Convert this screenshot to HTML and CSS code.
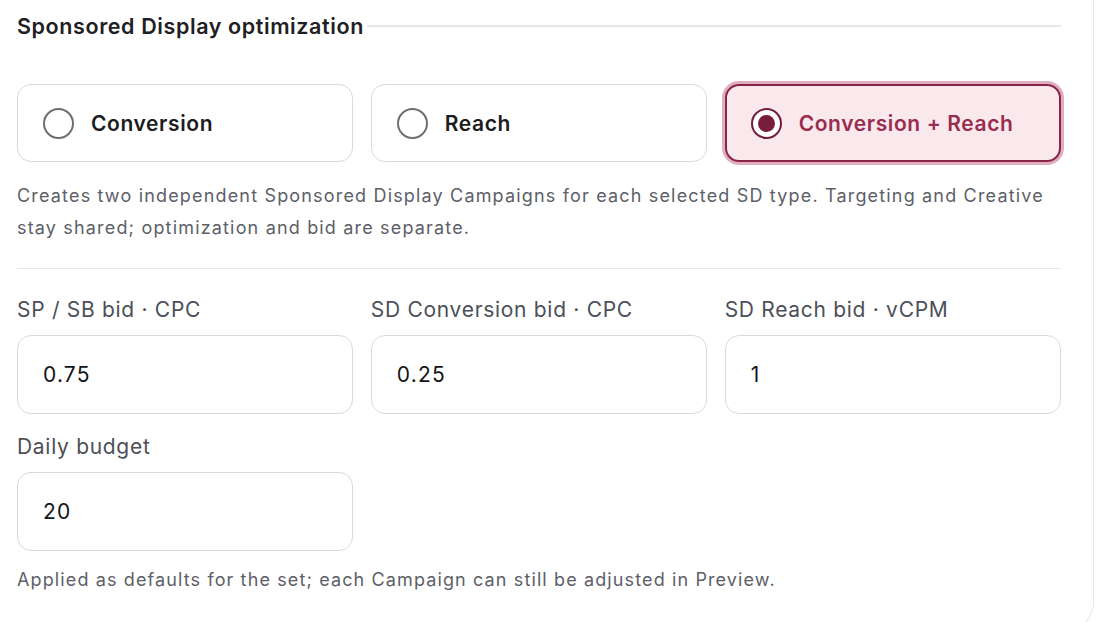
FILE: index.html
```html
<!DOCTYPE html>
<html lang="en">
<head>
<meta charset="utf-8">
<title>Sponsored Display optimization</title>
<link rel="stylesheet" href="styles.css">
</head>
<body>
<div class="panel">
  <div class="section-head">
    <h2 class="section-title">Sponsored Display optimization</h2>
    <div class="head-rule"></div>
  </div>

  <div class="options">
    <label class="option">
      <span class="radio"></span>
      <span class="option-text">Conversion</span>
    </label>
    <label class="option">
      <span class="radio"></span>
      <span class="option-text">Reach</span>
    </label>
    <label class="option selected">
      <span class="radio"><span class="dot"></span></span>
      <span class="option-text">Conversion + Reach</span>
    </label>
  </div>

  <p class="desc">Creates two independent Sponsored Display Campaigns for each selected SD type. Targeting and Creative stay shared; optimization and bid are separate.</p>

  <div class="divider"></div>

  <div class="fields">
    <div class="field">
      <div class="field-label">SP / SB bid · CPC</div>
      <div class="input">0.75</div>
    </div>
    <div class="field">
      <div class="field-label">SD Conversion bid · CPC</div>
      <div class="input">0.25</div>
    </div>
    <div class="field">
      <div class="field-label">SD Reach bid · vCPM</div>
      <div class="input">1</div>
    </div>
    <div class="field">
      <div class="field-label">Daily budget</div>
      <div class="input">20</div>
    </div>
  </div>

  <p class="note">Applied as defaults for the set; each Campaign can still be adjusted in Preview.</p>
</div>
</body>
</html>
```

FILE: styles.css
```css
* { box-sizing: border-box; }

html, body {
  margin: 0;
  padding: 0;
  background: #ffffff;
  overflow: hidden;
}

body {
  font-family: Inter, "Noto Sans", "Liberation Sans", sans-serif;
  color: #1d1e22;
}

.panel {
  width: 1094px;
  height: 632px;
  padding: 14px 32px 0 17px;
  border-right: 1.5px solid #e7e8eb;
  border-bottom: 1.5px solid #e7e8eb;
  border-bottom-right-radius: 30px;
  background: #ffffff;
}

.section-head {
  display: flex;
  align-items: center;
  gap: 3px;
}

.section-title {
  margin: 0;
  font-size: 21.5px;
  line-height: 24px;
  font-weight: 600;
  color: #1f2024;
  letter-spacing: 0.6px;
  white-space: nowrap;
}

.head-rule {
  flex: 1;
  height: 1.5px;
  background: #e6e7eb;
}

.options {
  margin-top: 46px;
  display: grid;
  grid-template-columns: repeat(3, 1fr);
  column-gap: 17.5px;
}

.option {
  height: 78px;
  display: flex;
  align-items: center;
  gap: 17px;
  padding-left: 25px;
  border: 1.5px solid #d9dadf;
  border-radius: 14px;
  background: #ffffff;
}

.radio {
  width: 31px;
  height: 31px;
  border-radius: 50%;
  border: 2px solid #6e6e72;
  display: flex;
  align-items: center;
  justify-content: center;
  flex: none;
}

.option-text {
  font-size: 21px;
  font-weight: 600;
  color: #1c1d21;
  letter-spacing: 0.6px;
}

.option.selected {
  background: #f9e9ed;
  border: 2px solid #8b2548;
  box-shadow: 0 0 0 3px #e0afbd;
  padding-left: 24px;
}

.option.selected .radio {
  border: 2.5px solid #741c3a;
  background: #ffffff;
}

.option.selected .dot {
  width: 17px;
  height: 17px;
  border-radius: 50%;
  background: #771d3c;
}

.option.selected .option-text {
  color: #9a2c50;
}

.desc {
  margin: 18px 0 0;
  font-size: 18px;
  line-height: 32px;
  color: #5d6068;
  letter-spacing: 1.17px;
}

.divider {
  margin-top: 23.5px;
  height: 1.5px;
  background: #e6e7eb;
}

.fields {
  margin-top: 27px;
  display: grid;
  grid-template-columns: repeat(3, 1fr);
  column-gap: 17.5px;
  row-gap: 19px;
}

.field {
  display: flex;
  flex-direction: column;
  gap: 11px;
}

.field-label {
  font-size: 21px;
  line-height: 28px;
  color: #4c4f58;
  letter-spacing: 0.7px;
}

.input {
  height: 79px;
  display: flex;
  align-items: center;
  padding-left: 25px;
  border: 1.5px solid #d9dadf;
  border-radius: 14px;
  font-size: 21px;
  color: #141518;
  letter-spacing: 1.2px;
}

.note {
  margin: 15px 0 0;
  font-size: 18px;
  line-height: 28px;
  color: #5d6068;
  letter-spacing: 1.12px;
}
```
